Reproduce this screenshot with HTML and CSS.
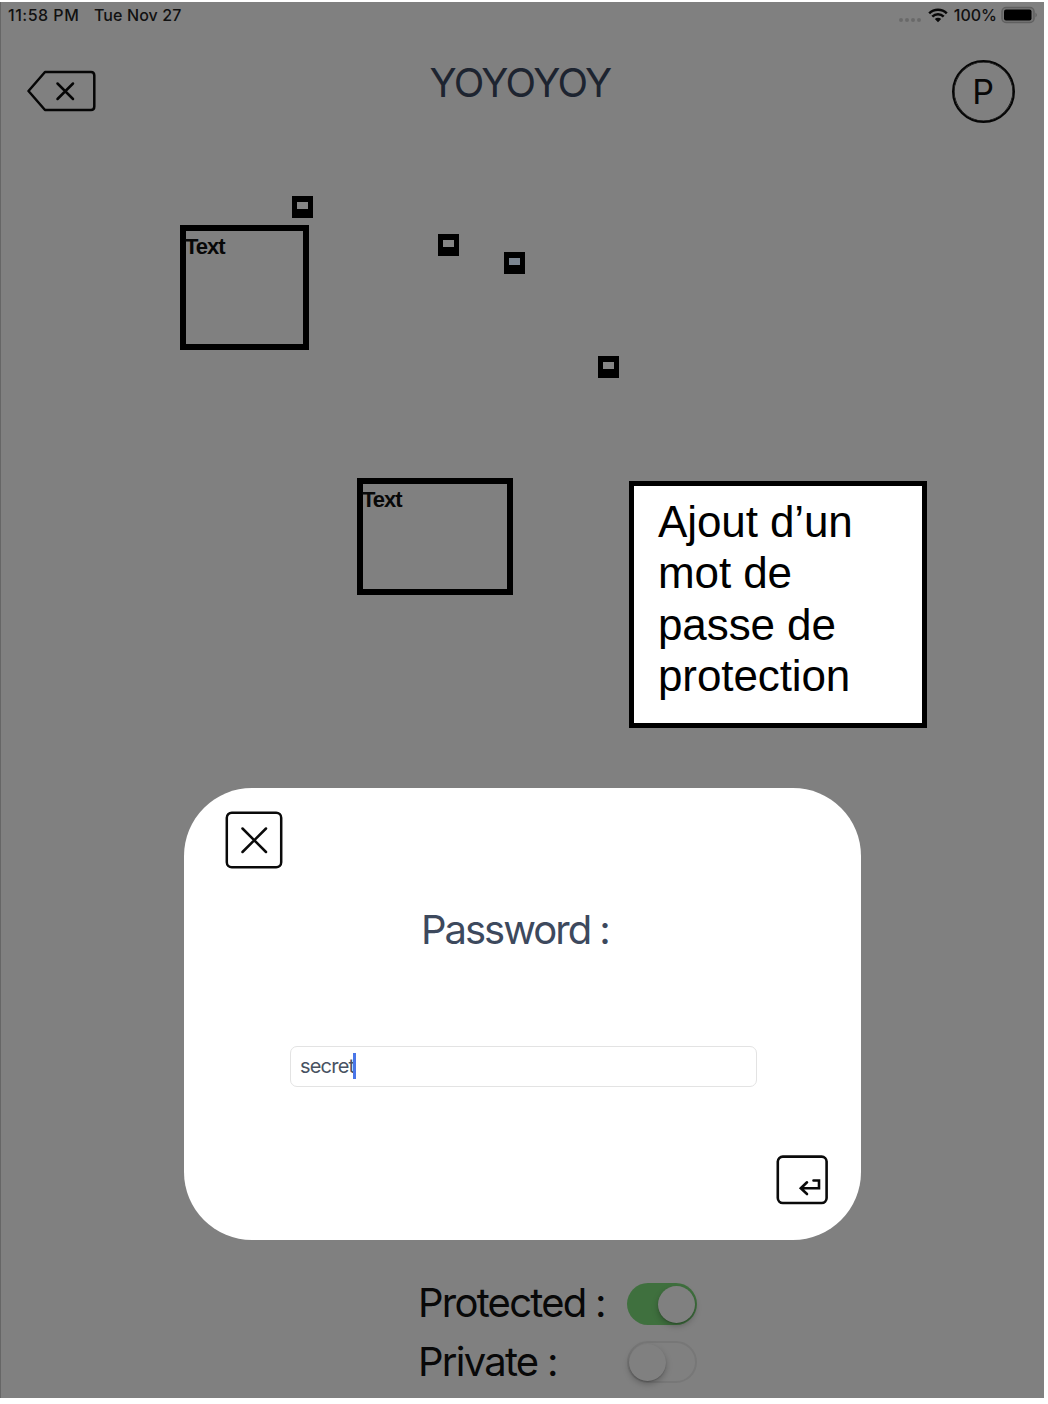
FILE: index.html
```html
<!DOCTYPE html>
<html lang="en">
<head>
<meta charset="utf-8">
<title>YOYOYOY</title>
<link rel="stylesheet" href="styles.css">
</head>
<body>
<main class="screen">
  <div class="status">
    <span class="time">11:58 PM</span>
    <span class="date">Tue Nov 27</span>
    <span class="signal"><i></i><i></i><i></i><i></i></span>
    <svg class="wifi" width="20" height="15" viewBox="0 0 20 15" fill="none" stroke="#080808" stroke-width="2.5">
      <path d="M1.2 5.3C6 .5 14 .5 18.800 5.300M4.300 8.600C7.400 5.500 12.600 5.500 15.700 8.600"/>
      <path d="M6.800 11C8.600 9.300 11.400 9.300 13.200 11L10 14.200Z" fill="#080808" stroke="none"/>
    </svg>
    <span class="percent">100%</span>
    <svg class="battery" width="37" height="18" viewBox="0 0 37 18">
      <rect x="1" y="1.500" width="32" height="15" rx="4" fill="#777" stroke="#606060" stroke-width="1.500"/>
      <rect x="3" y="3.500" width="27.500" height="11" rx="2" fill="#000"/>
      <path d="M34.500 6.500Q37 9 34.500 11.500Z" fill="#5c5c5c"/>
    </svg>
  </div>
  <header class="header">
    <svg class="back" width="70" height="42" viewBox="0 0 70 42" fill="none" stroke="#050505" stroke-width="2.500" stroke-linecap="round" stroke-linejoin="round">
      <path d="M18 2H64Q67.300 2 67.300 5.500V36.500Q67.300 40 64 40H18L1.500 21Z"/>
      <path d="M30.500 13.500L46 29M46 13.500L30.500 29"/>
    </svg>
    <h1 class="title">YOYOYOY</h1>
    <div class="profile">P</div>
  </header>
  <section class="canvas">
    <div class="node box-a"><span>Text</span></div>
    <div class="node box-b"><span>Text</span></div>
    <div class="dot dot-a"></div>
    <div class="dot dot-b"></div>
    <div class="dot dot-c"></div>
    <div class="dot dot-d"></div>
    <aside class="note">Ajout d’un<br>mot de<br>passe de<br>protection</aside>
  </section>
  <section class="settings">
    <div class="row"><span class="label">Protected :</span><span class="switch on"><i></i></span></div>
    <div class="row"><span class="label">Private :</span><span class="switch"><i></i></span></div>
  </section>
  <section class="dialog">
    <svg class="close" width="58" height="58" viewBox="0 0 58 58" fill="none" stroke="#0a0a0a" stroke-width="2.500" stroke-linecap="round">
      <rect x="1.800" y="1.700" width="54.400" height="54.600" rx="5"/>
      <path d="M17.500 17.500L41 41M41 17.500L17.500 41"/>
    </svg>
    <h2 class="dialog-title">Password :</h2>
    <div class="field"><span class="value">secret</span><i class="caret"></i></div>
    <svg class="enter" width="52" height="50" viewBox="0 0 52 50" fill="none" stroke="#0a0a0a" stroke-width="2.600">
      <rect x="1.800" y="1.600" width="48.800" height="46.400" rx="5"/>
      <path d="M37.500 25.500H43V33.200H25M31 27.300L24.800 33.200L31 39" stroke-linecap="round"/>
    </svg>
  </section>
</main>
</body>
</html>
```

FILE: styles.css
```css
* { box-sizing: border-box; }
body {
  margin: 0;
  padding-top: 2px;
  background: #fff;
  font-family: Inter, "Liberation Sans", sans-serif;
}
.screen {
  position: relative;
  display: flex;
  flex-direction: column;
  width: 1044px;
  height: 1396px;
  background: #808080;
  border-left: 1px solid #666;
}
.status {
  display: flex;
  align-items: center;
  height: 26px;
  padding: 0 6px 0 7px;
  font-size: 16px;
  font-weight: 500;
  color: #111;
}
.time { width: 86px; letter-spacing: .5px; }
.date { letter-spacing: .1px; }
.signal { display: flex; gap: 2px; margin: 9px 7px 0 auto; }
.signal i { width: 4px; height: 4px; border-radius: 50%; background: #696969; }
.percent { margin: 0 4px 0 6px; }
.header {
  display: flex;
  justify-content: space-between;
  align-items: flex-start;
  height: 112px;
  padding: 32px 29px 0 26px;
}
.back { margin-top: 10px; }
.title {
  width: 190px;
  margin: -1px 0 0;
  font-size: 40px;
  font-weight: 400;
  line-height: 48px;
  letter-spacing: -1.6px;
  white-space: nowrap;
  color: #1d2430;
}
.profile {
  width: 63px;
  height: 63px;
  border: 2px solid #050505;
  box-shadow: inset 0 0 0 .6px #050505;
  border-radius: 50%;
  text-align: center;
  text-indent: -1px;
  font-size: 34px;
  line-height: 60px;
  color: #080808;
}
.canvas { position: relative; flex: 1; }
.node { position: absolute; border: 6px solid #000; }
.node span {
  display: block;
  margin: 4px 0 0 -1px;
  font: bold 22px/24px "Liberation Sans", Arial, sans-serif;
  letter-spacing: -1px;
  color: #080808;
}
.box-a { left: 179px; top: 85px; width: 129px; height: 125px; }
.box-b { left: 356px; top: 338px; width: 156px; height: 117px; }
.dot {
  position: absolute;
  width: 21px;
  height: 22px;
  border: solid #000;
  border-width: 6px 5px 9px;
  background: #858585;
}
.dot-a { left: 291px; top: 56px; }
.dot-b { left: 437px; top: 94px; }
.dot-c { left: 503px; top: 112px; background: #7b8590; }
.dot-d { left: 597px; top: 216px; }
.note {
  position: absolute;
  left: 628px;
  top: 341px;
  width: 298px;
  height: 247px;
  padding: 10px 24px;
  border: 5px solid #000;
  background: #fff;
  font: 44px/51.400px "Liberation Sans", Arial, sans-serif;
  letter-spacing: -.1px;
  color: #000;
}
.settings { height: 125px; padding-left: 417px; }
.row { display: flex; align-items: center; height: 59px; }
.label {
  width: 209px;
  font-size: 40px;
  line-height: 48px;
  letter-spacing: -1.750px;
  white-space: nowrap;
  color: #080808;
}
.switch {
  width: 70px;
  height: 42px;
  padding: 1px 0;
  border: 2px solid #777;
  border-radius: 21px;
}
.switch i {
  display: block;
  width: 37px;
  height: 37px;
  border-radius: 50%;
  background: #808080;
  box-shadow: 0 3px 6px rgba(0, 0, 0, .25), 0 1px 1px rgba(0, 0, 0, .15);
}
.on { margin-top: 3px; padding: 3px 2px; border: 0; background: #3f703e; }
.on i { margin-left: auto; }
.dialog {
  position: absolute;
  left: 183px;
  top: 786px;
  width: 677px;
  height: 452px;
  padding: 23px 33px 0 41px;
  display: flex;
  flex-direction: column;
  border-radius: 68px;
  background: #fff;
}
.dialog-title {
  margin: 37px 0 0 196px;
  font-size: 40px;
  font-weight: 400;
  line-height: 48px;
  letter-spacing: -2px;
  color: #3d495d;
}
.field {
  display: flex;
  align-items: center;
  width: 467px;
  height: 41px;
  margin: 92px 0 68px 65px;
  padding-left: 9px;
  border: 1px solid #e3e3e3;
  border-radius: 7px;
  font-size: 20px;
  letter-spacing: -.8px;
  color: #485262;
}
.value { margin-top: -1px; }
.caret { width: 3px; height: 26px; margin: -2px 0 0 -1px; background: #4a76e8; }
.enter { align-self: flex-end; }
```
